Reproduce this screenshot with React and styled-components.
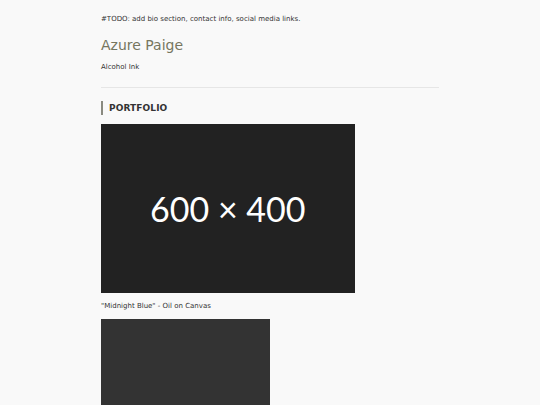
import React from 'react';
import styled, { createGlobalStyle } from 'styled-components';

const GlobalStyle = createGlobalStyle`
  html, body {
    margin: 0;
    padding: 0;
    background: #f9f9f9;
  }
  body {
    font-family: "DejaVu Sans", Verdana, sans-serif;
    color: #333;
  }
`;

const Page = styled.main`
  width: 338px;
  margin: 0 auto;
  padding-top: 15px;
`;

const Note = styled.p`
  font-size: 7px;
  margin: 0 0 14px;
`;

const Name = styled.h1`
  font-size: 14px;
  font-weight: normal;
  color: #76765f;
  margin: 0 0 10px;
`;

const Medium = styled.p`
  font-size: 7px;
  margin: 0 0 16px;
`;

const Divider = styled.hr`
  border: none;
  border-top: 1px solid #e6e6e6;
  margin: 0 0 13px;
`;

const SectionTitle = styled.h2`
  font-size: 9px;
  font-weight: bold;
  letter-spacing: 0.1px;
  text-transform: uppercase;
  color: #333;
  border-left: 2px solid #8a8a80;
  padding: 2px 0 2px 6px;
  margin: 0 0 9px;
  line-height: 10px;
`;

const Gallery = styled.div`
  display: flex;
  flex-direction: column;
`;

const Figure = styled.figure`
  margin: 0 0 9px;
`;

const Placeholder = styled.div`
  width: ${({ $width }) => $width};
  aspect-ratio: 3 / 2;
  background: ${({ $bg }) => $bg};
  display: flex;
  align-items: center;
  justify-content: center;
  color: #fff;
  font-family: Lato, "Open Sans", sans-serif;
  font-size: 34px;
`;

const Caption = styled.figcaption`
  font-size: 7px;
  margin-top: 9px;
`;

const works = [
  { id: 1, width: '75%', bg: '#222', label: '600 × 400', caption: '"Midnight Blue" - Oil on Canvas' },
  { id: 2, width: '50%', bg: '#333', label: '', caption: '' },
];

export default function App() {
  return (
    <>
      <GlobalStyle />
      <Page>
        <Note>#TODO: add bio section, contact info, social media links.</Note>
        <Name>Azure Paige</Name>
        <Medium>Alcohol Ink</Medium>
        <Divider />
        <SectionTitle>Portfolio</SectionTitle>
        <Gallery>
          {works.map((w) => (
            <Figure key={w.id}>
              <Placeholder $width={w.width} $bg={w.bg}>{w.label}</Placeholder>
              {w.caption && <Caption>{w.caption}</Caption>}
            </Figure>
          ))}
        </Gallery>
      </Page>
    </>
  );
}
